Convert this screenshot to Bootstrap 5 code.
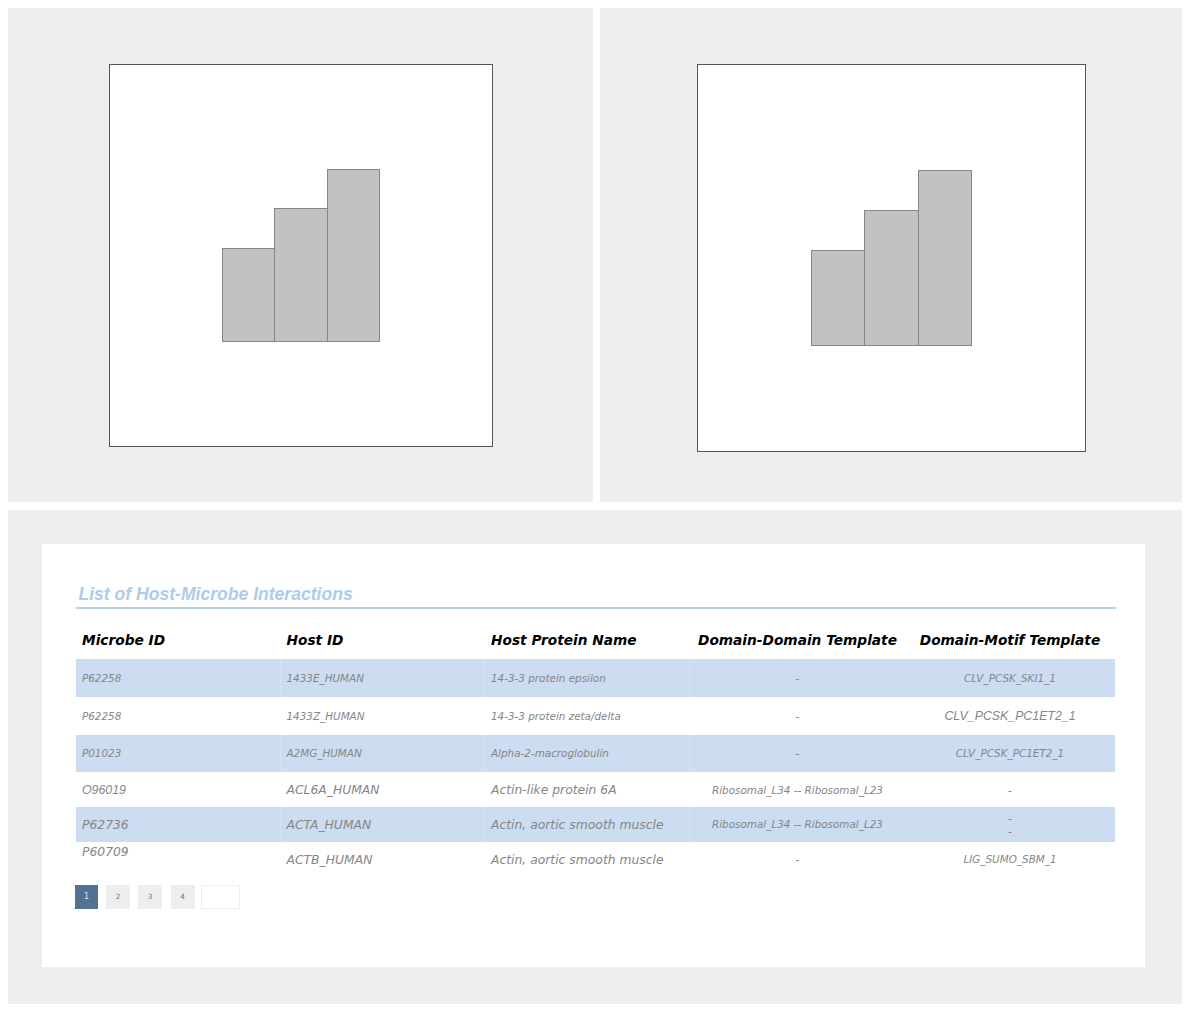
<!DOCTYPE html>
<html lang="en">
<head>
<meta charset="utf-8">
<meta name="viewport" content="width=device-width, initial-scale=1">
<title>Host-Microbe Interactions</title>
<link href="https://cdn.jsdelivr.net/npm/bootstrap@5.3.0/dist/css/bootstrap.min.css" rel="stylesheet">
<style>
body{background:#fff;font-family:"DejaVu Sans",sans-serif;font-style:italic;overflow:hidden}
.page-wrap{padding:8.4px 7.6px 8.6px 8.4px;width:1190px;height:1013px}
.pane{background:#eee}
.top-panes{height:494px;gap:7px;margin-bottom:8px}
.pane-a{width:585px;padding:55.6px 0 0 100.6px}
.pane-b{width:582px;padding:55.6px 0 0 96.6px}
.plot{background:#fff;border:1px solid #555}
.plot-a{width:384px;height:383px;padding:0 112px 104px}
.plot-b{width:389px;height:388px;padding:0 113px 105px}
.bar{background:#c2c2c2;border:1px solid #858585;margin-right:-1px;flex:none}
.pane-c{width:1174px;height:494px;padding:33.6px 37.4px 37.4px 33.6px}
.sheet{background:#fff;height:423px;padding:38px 29px 0 34px}
.heading{font:italic bold 17.57px/24px "Liberation Sans",sans-serif;color:#aecbeb;height:27px;border-bottom:2px solid #b4cfec;padding-left:2.5px;margin:0;width:1040px;white-space:nowrap}
.grid-table{width:1039px;table-layout:fixed;margin:11px 0 0;border-collapse:separate;border-spacing:0;color:#868686;font-size:10.4px;line-height:13px;--bs-table-bg:transparent}
.grid-table>:not(caption)>*>*{padding:0 0 0 6px;border:0;vertical-align:middle;white-space:nowrap;color:inherit;background:none;box-shadow:none}
.grid-table thead th{color:#000;font-size:13.72px;font-weight:bold;padding-top:2px}
.grid-table tr>:nth-child(2){padding-left:5.5px}
.grid-table tr>:nth-child(n+4){text-align:center;padding-left:0}
.grid-table .tint td{background:#ccdcf1}
.grid-table .tint td:nth-child(-n+3){border-right:1px solid #d5e3f4}
.grid-table .tall td{padding-top:1.5px}
.grid-table .low td{padding-top:2px}
.grid-table .low td.raised{padding-top:4px;vertical-align:top}
.grid-table .low td.double{padding-top:1.5px}
.grid-table .low td.level{padding-top:0}
.grid-table .big{font-size:12.35px}
.grid-table .arial{font-family:"Liberation Sans",sans-serif}
.pager{gap:8px;margin:8px 0 0 -1px;font-style:normal;font-size:7.2px}
.pager-item{width:24px;height:24px;background:#eee;color:#54739a}
.pager-item.current{width:23px;background:#527193;color:#dce8f5;font-size:8px;padding-top:1px}
.pager-item.last{margin-left:.6px}
.pager-input{width:39px;height:24px;border:1px solid #eee;background:#fff;margin-left:-1.6px}
</style>
</head>
<body>
<main class="page-wrap">
<div class="d-flex top-panes">
<section class="pane pane-a"><div class="plot plot-a d-flex align-items-end">
<div class="bar" style="width:53px;height:94px"></div><div class="bar" style="width:54px;height:134px"></div><div class="bar" style="width:53px;height:173px"></div>
</div></section>
<section class="pane pane-b"><div class="plot plot-b d-flex align-items-end">
<div class="bar" style="width:54px;height:96px"></div><div class="bar" style="width:55px;height:136px"></div><div class="bar" style="width:54px;height:176px"></div>
</div></section>
</div>
<section class="pane pane-c"><div class="sheet">
<h1 class="heading">List of Host-Microbe Interactions</h1>
<table class="table grid-table">
<colgroup><col style="width:205px"><col style="width:204px"><col style="width:205px"><col style="width:215px"><col style="width:210px"></colgroup>
<thead><tr style="height:39px"><th>Microbe ID</th><th>Host ID</th><th>Host Protein Name</th><th>Domain-Domain Template</th><th>Domain-Motif Template</th></tr></thead>
<tbody>
<tr class="tint tall" style="height:38px"><td>P62258</td><td>1433E_HUMAN</td><td>14-3-3 protein epsilon</td><td>-</td><td>CLV_PCSK_SKI1_1</td></tr>
<tr class="tall" style="height:38px"><td>P62258</td><td>1433Z_HUMAN</td><td>14-3-3 protein zeta/delta</td><td>-</td><td class="big arial">CLV_PCSK_PC1ET2_1</td></tr>
<tr class="tint" style="height:37px"><td>P01023</td><td>A2MG_HUMAN</td><td>Alpha-2-macroglobulin</td><td>-</td><td>CLV_PCSK_PC1ET2_1</td></tr>
<tr class="low" style="height:35px"><td class="big arial">O96019</td><td class="big">ACL6A_HUMAN</td><td class="big">Actin-like protein 6A</td><td>Ribosomal_L34 -- Ribosomal_L23</td><td>-</td></tr>
<tr class="tint low" style="height:35px"><td class="big">P62736</td><td class="big">ACTA_HUMAN</td><td class="big">Actin, aortic smooth muscle</td><td class="level">Ribosomal_L34 -- Ribosomal_L23</td><td class="double">-<br>-</td></tr>
<tr class="low" style="height:35px"><td class="big raised">P60709</td><td class="big">ACTB_HUMAN</td><td class="big">Actin, aortic smooth muscle</td><td class="level">-</td><td class="level">LIG_SUMO_SBM_1</td></tr>
</tbody></table>
<nav class="d-flex pager">
<div class="pager-item current d-flex align-items-center justify-content-center">1</div>
<div class="pager-item d-flex align-items-center justify-content-center">2</div>
<div class="pager-item d-flex align-items-center justify-content-center">3</div>
<div class="pager-item last d-flex align-items-center justify-content-center">4</div>
<div class="pager-input"></div>
</nav>
</div></section>
</main>
<script src="https://cdn.jsdelivr.net/npm/bootstrap@5.3.0/dist/js/bootstrap.bundle.min.js"></script>
</body>
</html>
